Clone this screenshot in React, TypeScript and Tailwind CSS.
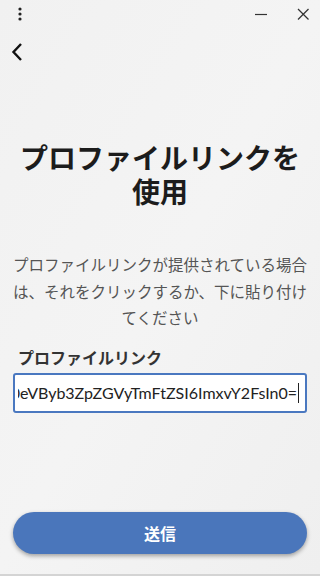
import React from "react";

export default function App() {
  const value =
    "eyJhdXRoVHlwZSI6Im9pZGMiLCJpZGVudGl0eVByb3ZpZGVyTmFtZSI6ImxvY2FsIn0=";
  return (
    <div
      className="relative flex h-[576px] w-[320px] flex-col overflow-hidden bg-[linear-gradient(120deg,#f1f1f1_0%,#f4f4f4_50%,#efefef_100%)]"
      style={{ fontFamily: "Lato, 'Noto Sans CJK JP', sans-serif" }}
    >
      {/* top window bar */}
      <div className="flex h-[28px] items-center justify-between pl-[16px] pr-[10px]">
        <svg width="8" height="16" viewBox="0 0 8 16" className="text-[#222]">
          <circle cx="4" cy="3" r="1.6" fill="currentColor" />
          <circle cx="4" cy="8" r="1.6" fill="currentColor" />
          <circle cx="4" cy="13" r="1.6" fill="currentColor" />
        </svg>
        <div className="flex items-center gap-[28px]">
          <svg width="14" height="14" viewBox="0 0 14 14">
            <line x1="1" y1="7.5" x2="13" y2="7.5" stroke="#333" strokeWidth="1.2" />
          </svg>
          <svg width="14" height="14" viewBox="0 0 14 14">
            <line x1="2" y1="2" x2="12.5" y2="12.5" stroke="#333" strokeWidth="1.2" />
            <line x1="12.5" y1="2" x2="2" y2="12.5" stroke="#333" strokeWidth="1.2" />
          </svg>
        </div>
      </div>

      {/* back */}
      <div className="flex h-[48px] items-center pl-[11px]">
        <svg width="12" height="20" viewBox="0 0 12 20">
          <polyline
            points="10,2 2.5,10 10,18"
            fill="none"
            stroke="#111"
            strokeWidth="2.4"
            strokeLinejoin="miter"
          />
        </svg>
      </div>

      {/* title */}
      <h1
        className="mt-[64px] px-[12px] text-center text-[28px] font-bold leading-[34px] text-[#1c1c1c]"
        style={{ fontFamily: "'Noto Sans CJK JP', sans-serif" }}
      >
        プロファイルリンクを
        <br />
        使用
      </h1>

      {/* description */}
      <p
        className="mt-[43px] px-[12px] text-center text-[15.5px] leading-[26.5px] text-[#555]"
        style={{ fontFamily: "'Noto Sans CJK JP', sans-serif" }}
      >
        プロファイルリンクが提供されている場合は、それをクリックするか、下に貼り付けてください
      </p>

      {/* label */}
      <label
        className="mt-[14px] px-[18px] text-[16px] font-bold leading-[24px] text-[#333]"
        style={{ fontFamily: "'Noto Sans CJK JP', sans-serif" }}
      >
        プロファイルリンク
      </label>

      {/* input */}
      <div className="mx-[13px] mt-[4px] flex h-[40px] items-center rounded-[3px] border-2 border-[#4a78c0] bg-white pl-[3px] pr-[6px]">
        <div className="flex min-w-0 flex-1 items-center justify-end overflow-hidden">
          <span className="whitespace-nowrap text-[16px] text-[#222]">{value}</span>
          <span className="ml-[1px] h-[20px] w-[1px] shrink-0 bg-[#222]" />
        </div>
      </div>

      {/* button */}
      <div className="mt-auto mb-[22px] px-[13px]">
        <button
          className="flex h-[42px] w-full items-center justify-center rounded-full bg-[#4a76bb] text-[16px] font-bold text-white shadow-[0_2px_4px_rgba(0,0,0,0.35)]"
          style={{ fontFamily: "'Noto Sans CJK JP', sans-serif" }}
        >
          送信
        </button>
      </div>
      <div className="absolute bottom-0 left-0 h-[2px] w-full bg-[#d4d4d4]" />
    </div>
  );
}
